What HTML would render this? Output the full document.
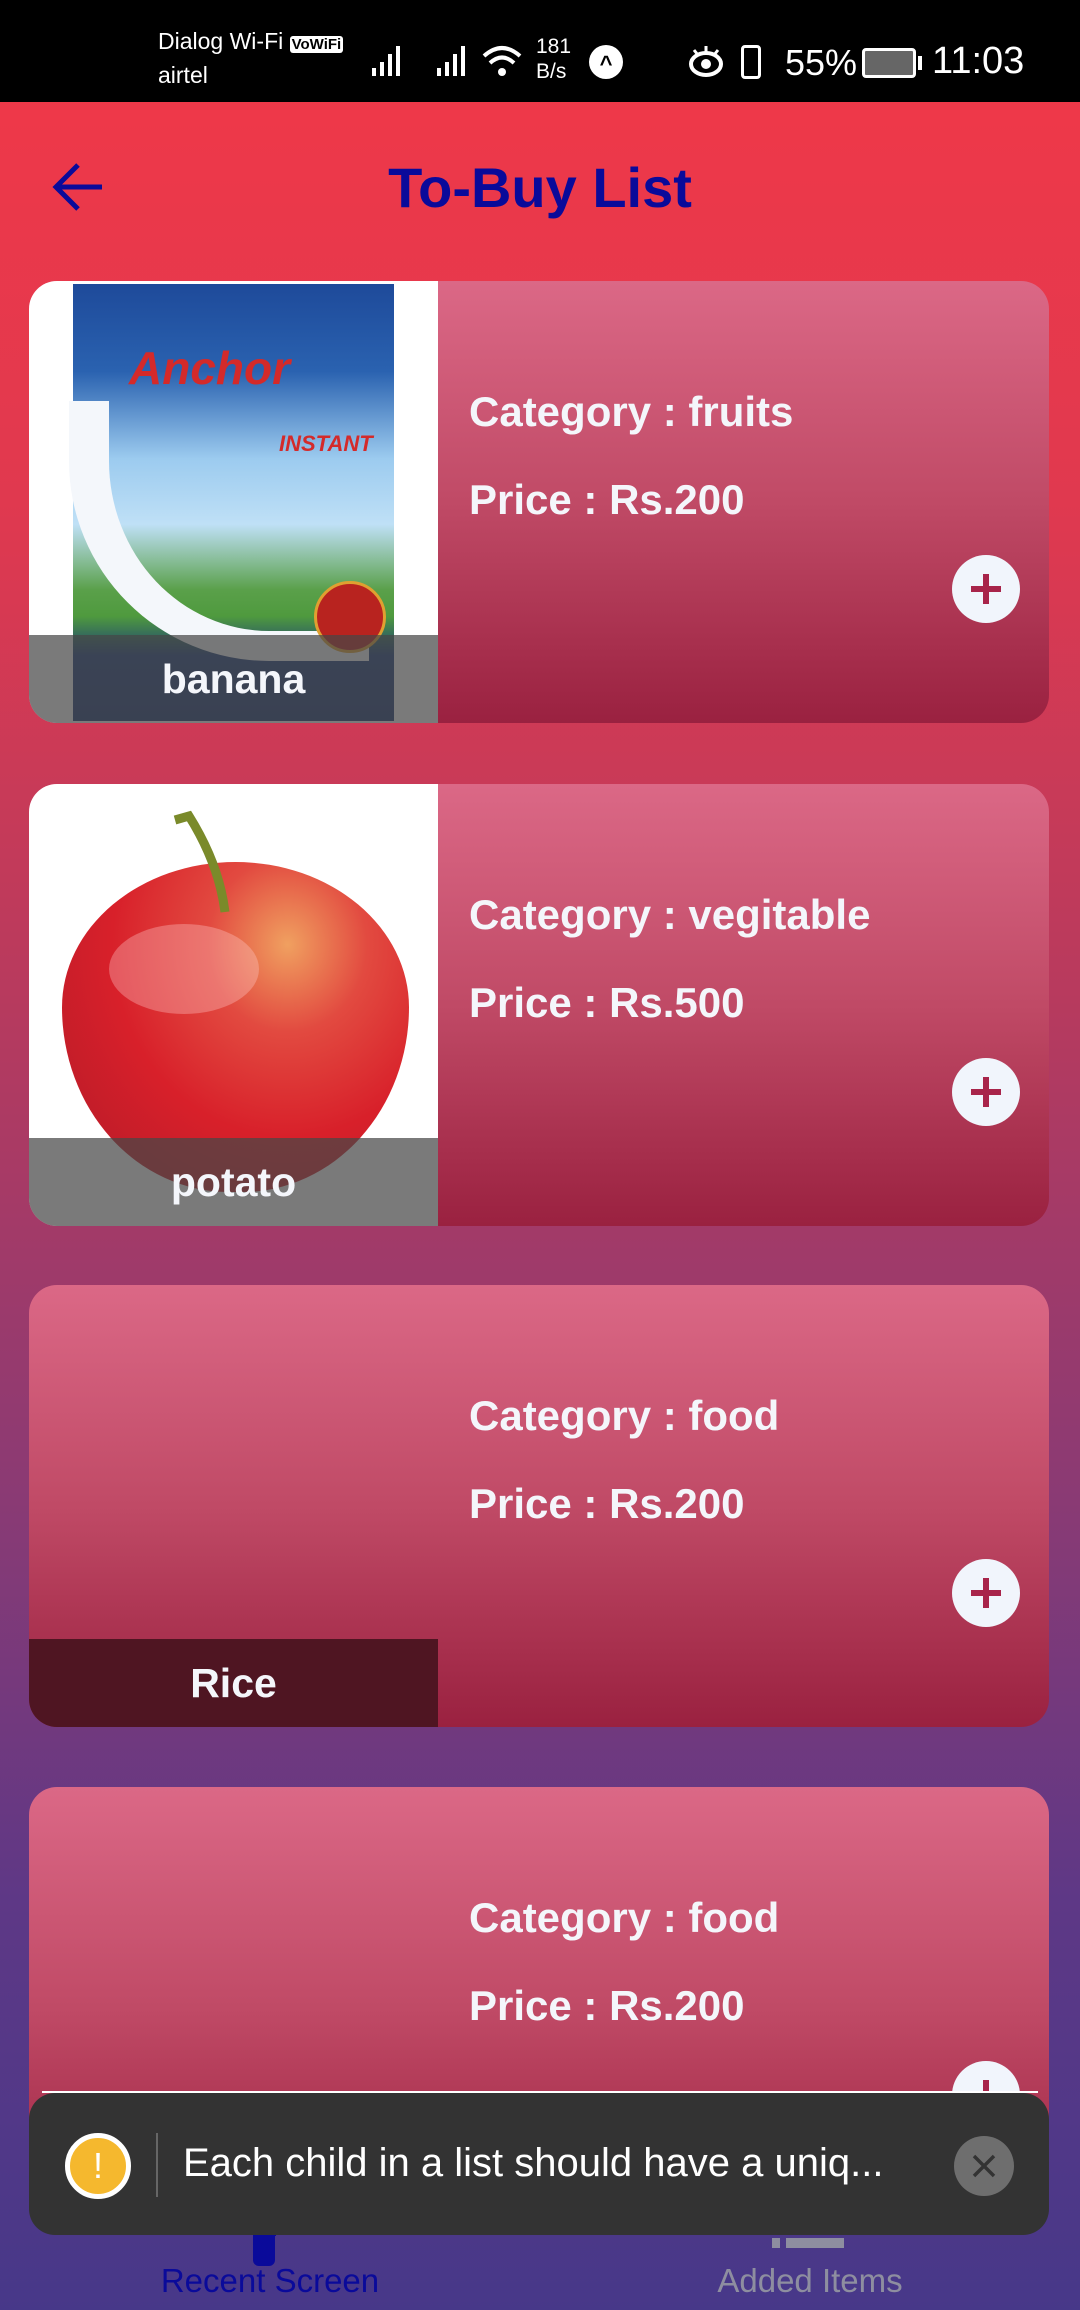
<!DOCTYPE html>
<html><head><meta charset="utf-8">
<style>
*{margin:0;padding:0;box-sizing:border-box}
body{width:1080px;height:2310px;overflow:hidden;position:relative;font-family:"Liberation Sans",sans-serif;
background:linear-gradient(180deg,#f23847 0px,#e0394f 500px,#b73a5e 1000px,#8a3a74 1500px,#5e3886 1900px,#473889 2310px);}
.status{position:absolute;left:0;top:0;width:1080px;height:102px;background:#000;color:#fff}
.status .t{position:absolute;font-size:23px}
.hdr-title{position:absolute;left:0;width:1080px;top:155px;text-align:center;font-size:56px;color:#0a0a9a;font-weight:bold}
.card{position:absolute;left:29px;width:1020px;height:442px;border-radius:28px;overflow:hidden;
background:linear-gradient(180deg,#db6886,#c04a66 50%,#9a2140)}
.img{position:absolute;left:0;top:0;width:409px;height:442px;background:#fff;overflow:hidden}
.cap{position:absolute;left:0;bottom:0;width:409px;height:88px;background:rgba(70,70,70,.72);color:#f4f6fb;font-weight:bold;font-size:41px;text-align:center;line-height:88px}
.cat,.price{position:absolute;left:440px;color:#f4f6fb;font-weight:bold;font-size:42px}
.cat{top:107px}.price{top:195px}
.plus{position:absolute;left:923px;top:274px;width:68px;height:68px;border-radius:50%;background:#f1f5fc}
.plus:before,.plus:after{content:"";position:absolute;background:#a8244a}
.plus:before{left:19px;top:31px;width:30px;height:6px}
.plus:after{left:31px;top:19px;width:6px;height:30px}
</style></head><body>
<div class="status">
 <div class="t" style="left:158px;top:28px">Dialog Wi-Fi <span style="background:#fff;color:#000;font-size:15px;font-weight:bold;padding:0 2px;border-radius:3px">VoWiFi</span></div>
 <div class="t" style="left:158px;top:62px">airtel</div>
 <svg style="position:absolute;left:370px;top:42px" width="50" height="36"><g fill="#fff"><rect x="2" y="26" width="4" height="8"/><rect x="10" y="20" width="4" height="14"/><rect x="18" y="12" width="4" height="22"/><rect x="26" y="4" width="4" height="30"/></g></svg>
 <svg style="position:absolute;left:435px;top:42px" width="40" height="36"><g fill="#fff"><rect x="2" y="26" width="4" height="8"/><rect x="10" y="20" width="4" height="14"/><rect x="18" y="12" width="4" height="22"/><rect x="26" y="4" width="4" height="30"/></g></svg>
 <svg style="position:absolute;left:480px;top:42px" width="45" height="40"><g fill="none" stroke="#fff" stroke-width="4"><path d="M4 14 Q22 -2 40 14"/><path d="M10 21 Q22 10 34 21"/></g><circle cx="22" cy="30" r="4" fill="#fff"/></svg>
 <div class="t" style="left:536px;top:34px;font-size:21px;line-height:25px">181<br>B/s</div>
 <div style="position:absolute;left:589px;top:45px;width:34px;height:34px;border-radius:50%;background:#fff;color:#000;font-size:22px;text-align:center;line-height:38px;font-weight:bold">^</div>
 <svg style="position:absolute;left:686px;top:44px" width="40" height="36"><g fill="none" stroke="#fff" stroke-width="4"><ellipse cx="20" cy="20" rx="15" ry="11"/></g><circle cx="20" cy="20" r="5" fill="#fff"/><path d="M8 6l4 5M32 6l-4 5M20 2v6" stroke="#fff" stroke-width="3"/></svg>
 <div style="position:absolute;left:741px;top:45px;width:20px;height:34px;border:3px solid #fff;border-radius:4px"></div>
 <div class="t" style="left:785px;top:42px;font-size:36px">55%</div>
 <div style="position:absolute;left:862px;top:48px;width:54px;height:30px;border:3px solid #fff;border-radius:4px;background:#666"></div>
 <div style="position:absolute;left:918px;top:56px;width:4px;height:14px;background:#fff"></div>
 <div class="t" style="left:932px;top:40px;font-size:38px">11:03</div>
</div>
<svg style="position:absolute;left:52px;top:163px" width="54" height="48"><path d="M4 24H50M26 2L4 24L26 46" fill="none" stroke="#0a0a9a" stroke-width="5"/></svg>
<div class="hdr-title">To-Buy List</div>

<div class="card" style="top:281px">
 <div class="img">
  <div style="position:absolute;left:44px;top:3px;width:321px;height:437px;background:linear-gradient(180deg,#1e4a9a 0,#2a62b0 20%,#9ccbef 40%,#bfe0f6 55%,#5aa04a 70%,#4f9a3e 76%,#1b3a7a 85%,#183470 100%)"></div>
  <div style="position:absolute;left:40px;top:120px;width:300px;height:260px;border-left:40px solid #f4f7fb;border-bottom:30px solid #f4f7fb;border-radius:0 0 0 200px"></div>
  <div style="position:absolute;left:100px;top:60px;color:#d42a2a;font-weight:bold;font-style:italic;font-size:46px">Anchor</div>
  <div style="position:absolute;left:250px;top:150px;color:#d42a2a;font-weight:bold;font-style:italic;font-size:22px">INSTANT</div>
  <div style="position:absolute;left:285px;top:300px;width:72px;height:72px;border-radius:50%;background:#b8231f;border:3px solid #e0a030"></div>
  <div class="cap">banana</div>
 </div>
 <div class="cat">Category : fruits</div><div class="price">Price : Rs.200</div><div class="plus"></div>
</div>

<div class="card" style="top:784px">
 <div class="img">
  <div style="position:absolute;left:33px;top:78px;width:347px;height:330px;border-radius:50% 50% 48% 48%/44% 44% 56% 56%;background:radial-gradient(ellipse at 65% 25%,#f0a060 0,#e24a40 25%,#d8202a 55%,#b01a28 100%)"></div>
  <div style="position:absolute;left:80px;top:140px;width:150px;height:90px;border-radius:50%;background:rgba(255,200,200,.35)"></div>
  <svg style="position:absolute;left:0;top:0" width="409" height="442"><path d="M146 36 L160 32 Q190 80 196 128" fill="none" stroke="#7a8a2a" stroke-width="9"/></svg>
  <div class="cap">potato</div>
 </div>
 <div class="cat">Category : vegitable</div><div class="price">Price : Rs.500</div><div class="plus"></div>
</div>

<div class="card" style="top:1285px">
 <div class="cap" style="background:#4f1522;height:88px">Rice</div>
 <div class="cat">Category : food</div><div class="price">Price : Rs.200</div><div class="plus"></div>
</div>

<div class="card" style="top:1787px">
 <div class="cat">Category : food</div><div class="price">Price : Rs.200</div><div class="plus"></div>
</div>

<svg style="position:absolute;left:243px;top:2200px" width="60" height="70"><path d="M16 20 L30 6 M30 6 V36 M20 6 H30" stroke="#0a0a9a" stroke-width="6" fill="none"/><rect x="10" y="22" width="22" height="44" rx="6" fill="#0a0a9a"/></svg>
<svg style="position:absolute;left:772px;top:2220px" width="76" height="40"><g fill="#8e8ea0"><rect x="0" y="0" width="8" height="10"/><rect x="14" y="0" width="58" height="10"/><rect x="0" y="18" width="8" height="10"/><rect x="14" y="18" width="58" height="10"/></g></svg>
<div style="position:absolute;left:0;width:540px;top:2262px;text-align:center;font-size:33px;color:#0a0a9a">Recent Screen</div>
<div style="position:absolute;left:540px;width:540px;top:2262px;text-align:center;font-size:33px;color:#8e8ea0">Added Items</div>

<div style="position:absolute;left:42px;top:2091px;width:996px;height:2px;background:#fff"></div>
<div style="position:absolute;left:29px;top:2093px;width:1020px;height:142px;background:#333;border-radius:26px">
 <div style="position:absolute;left:36px;top:40px;width:66px;height:66px;border-radius:50%;background:#f5b82e;border:5px solid #fff;color:#fff;text-align:center;font-size:36px;line-height:56px">!</div>
 <div style="position:absolute;left:127px;top:40px;width:2px;height:64px;background:#666"></div>
 <div style="position:absolute;left:154px;top:48px;color:#fff;font-size:40px;white-space:nowrap">Each child in a list should have a uniq...</div>
 <div style="position:absolute;left:925px;top:43px;width:60px;height:60px;border-radius:50%;background:#6e6e6e">
  <svg width="60" height="60"><path d="M20 20L40 40M40 20L20 40" stroke="#333" stroke-width="3.5"/></svg></div>
</div>
</body></html>
